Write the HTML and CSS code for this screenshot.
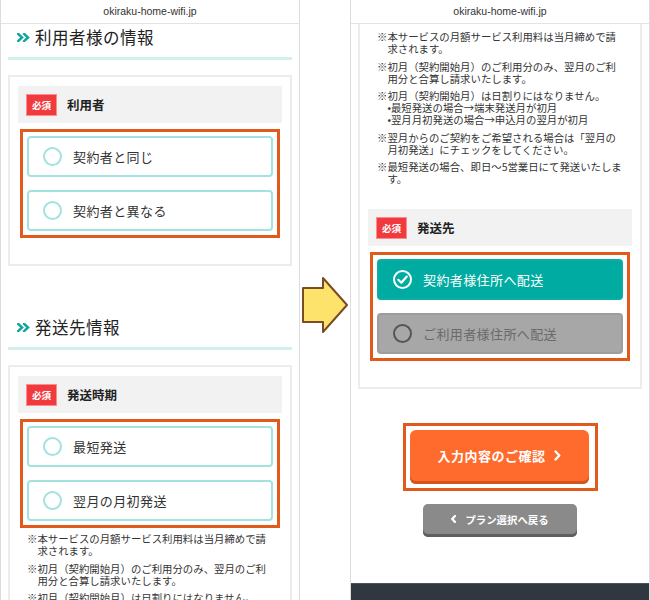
FILE: index.html
```html
<!DOCTYPE html>
<html lang="ja">
<head>
<meta charset="utf-8">
<title>okiraku-home-wifi</title>
<link rel="stylesheet" href="styles.css">
</head>
<body>
<div class="stage">
  <div class="phone">
    <div class="urlbar">okiraku-home-wifi.jp</div>
    <div class="page">
      <h2 class="sec-title"><svg class="dchev" width="13" height="9" viewBox="0 0 13 9"><polyline points="1.2,1 5,4.5 1.2,8"/><polyline points="7.2,1 11,4.5 7.2,8"/></svg>利用者様の情報</h2>
      <div class="card">
        <div class="field-head"><span class="req">必須</span><span class="field-label">利用者</span></div>
        <div class="hl">
          <div class="opt"><span class="radio"></span>契約者と同じ</div>
          <div class="opt"><span class="radio"></span>契約者と異なる</div>
        </div>
      </div>
      <h2 class="sec-title sec-title--gap"><svg class="dchev" width="13" height="9" viewBox="0 0 13 9"><polyline points="1.2,1 5,4.5 1.2,8"/><polyline points="7.2,1 11,4.5 7.2,8"/></svg>発送先情報</h2>
      <div class="card">
        <div class="field-head"><span class="req">必須</span><span class="field-label">発送時期</span></div>
        <div class="hl">
          <div class="opt"><span class="radio"></span>最短発送</div>
          <div class="opt"><span class="radio"></span>翌月の月初発送</div>
        </div>
        <div class="notes">
          <p>※本サービスの月額サービス利用料は当月締めで請<br>求されます。</p>
          <p>※初月（契約開始月）のご利用分のみ、翌月のご利<br>用分と合算し請求いたします。</p>
          <p>※初月（契約開始月）は日割りにはなりません。<br>•最短発送の場合→端末発送月が初月<br>•翌月月初発送の場合→申込月の翌月が初月</p>
          <p>※翌月からのご契約をご希望される場合は「翌月の<br>月初発送」にチェックをしてください。</p>
        </div>
      </div>
    </div>
  </div>

  <div class="between">
    <svg class="arrow" width="48" height="58" viewBox="0 0 48 58"><polygon points="2,12 22,12 22,2 46,29 22,56 22,46 2,46"/></svg>
  </div>

  <div class="phone">
    <div class="urlbar">okiraku-home-wifi.jp</div>
    <div class="page">
      <div class="card card--cont">
        <div class="notes">
          <p>※本サービスの月額サービス利用料は当月締めで請<br>求されます。</p>
          <p>※初月（契約開始月）のご利用分のみ、翌月のご利<br>用分と合算し請求いたします。</p>
          <p>※初月（契約開始月）は日割りにはなりません。<br>•最短発送の場合→端末発送月が初月<br>•翌月月初発送の場合→申込月の翌月が初月</p>
          <p>※翌月からのご契約をご希望される場合は「翌月の<br>月初発送」にチェックをしてください。</p>
          <p>※最短発送の場合、即日〜5営業日にて発送いたしま<br>す。</p>
        </div>
        <div class="field-head field-head--gap"><span class="req">必須</span><span class="field-label">発送先</span></div>
        <div class="hl">
          <div class="opt opt--on"><svg class="check" width="19" height="19" viewBox="0 0 19 19"><circle cx="9.5" cy="9.5" r="8.5"/><polyline points="5.3,9.8 8.3,12.8 13.8,6.6"/></svg>契約者様住所へ配送</div>
          <div class="opt opt--off"><span class="radio"></span>ご利用者様住所へ配送</div>
        </div>
      </div>
      <div class="actions">
        <div class="hl hl--btn">
          <a class="btn-next">入力内容のご確認<svg width="7" height="11" viewBox="0 0 7 11"><polyline points="1.5,1.5 5.3,5.5 1.5,9.5"/></svg></a>
        </div>
        <a class="btn-back"><svg width="5" height="8" viewBox="0 0 5 8"><polyline points="4,1 1.2,4 4,7"/></svg>プラン選択へ戻る</a>
      </div>
    </div>
    <div class="footer"></div>
  </div>
</div>
</body>
</html>
```

FILE: styles.css
```css
* { box-sizing: border-box; margin: 0; padding: 0; }
html, body { width: 650px; height: 600px; overflow: hidden; background: #fff; }
body { font-family: "Noto Sans CJK JP", "Liberation Sans", sans-serif; color: #333; }

.stage { display: flex; width: 650px; height: 600px; }

.phone {
  flex: none;
  width: 300px;
  height: 600px;
  border-left: 1px solid #dcdcdc;
  border-right: 1px solid #dcdcdc;
  overflow: hidden;
  display: flex;
  flex-direction: column;
  background: #fff;
}
.urlbar {
  flex: none;
  height: 24px;
  border-bottom: 1px solid #e3e3e3;
  font-family: "Liberation Sans", Arial, sans-serif;
  font-size: 10.5px;
  line-height: 23px;
  text-align: center;
  color: #333;
}
.page { flex: none; padding: 0 7px; }

.sec-title {
  display: flex;
  align-items: center;
  gap: 5px;
  padding: 1px 0 7px 9px;
  border-bottom: 3px solid #d3f0ef;
  font-size: 16.5px;
  line-height: 25px;
  font-weight: 400;
  letter-spacing: .5px;
  color: #222;
}
.sec-title--gap { margin-top: 48px; }
.dchev { flex: none; }
.dchev polyline { fill: none; stroke: #12a59c; stroke-width: 2.5; stroke-linecap: square; }

.card {
  margin-top: 15px;
  border: 2px solid #ececec;
  padding: 9px 8px 26px;
}
.card--cont { margin-top: 0; border-top: 0; padding-top: 7px; }

.field-head {
  display: flex;
  align-items: center;
  gap: 10px;
  height: 37px;
  padding-left: 8px;
  background: #f2f2f2;
}
.field-head--gap { margin-top: 24px; }
.req {
  width: 31px;
  height: 22px;
  display: flex;
  align-items: center;
  justify-content: center;
  background: #f13a3e;
  box-shadow: inset 0 0 0 1px #ff8c8c;
  color: #fff;
  font-size: 9.6px;
  font-weight: 700;
}
.field-label { font-size: 12.5px; font-weight: 700; color: #222; }

.hl {
  margin: 6px 2px 0;
  border: 3px solid #e15a1b;
  padding: 4px;
  display: flex;
  flex-direction: column;
  gap: 13px;
}
.opt {
  height: 41px;
  display: flex;
  align-items: center;
  gap: 11px;
  padding-left: 14px;
  border: 2px solid #a3e2df;
  border-radius: 4px;
  background: #fff;
  font-size: 13px;
  letter-spacing: .4px;
  color: #333;
}
.radio {
  flex: none;
  width: 19px;
  height: 19px;
  border: 2px solid #a3e2df;
  border-radius: 50%;
}
.opt--on { background: #00aba1; border-color: #0aaea4; color: #fff; }
.opt--off { background: #a7a7a7; border-color: #9d9d9d; color: #6a6a6a; }
.opt--off .radio { border-color: #555; }
.check { flex: none; }
.check circle { fill: none; stroke: #fff; stroke-width: 2; }
.check polyline { fill: none; stroke: #fff; stroke-width: 2.2; stroke-linecap: round; stroke-linejoin: round; }

.notes {
  margin-top: 5px;
  padding-left: 9px;
  font-size: 10.4px;
  line-height: 12px;
  color: #333;
}
.card--cont .notes { margin-top: 0; }
.notes p { padding-left: 1em; text-indent: -1em; white-space: nowrap; }
.notes p + p { margin-top: 5.5px; }

.between {
  flex: none;
  width: 50px;
  display: flex;
  align-items: center;
  justify-content: center;
  padding-top: 9px;
}
.arrow polygon { fill: #fde36b; stroke: #7b4b22; stroke-width: 2; stroke-linejoin: round; }

.actions {
  display: flex;
  flex-direction: column;
  align-items: center;
  gap: 13px;
  margin-top: 34px;
}
.hl--btn { margin: 0; width: 195px; }
.btn-next {
  width: 179px;
  height: 54px;
  display: flex;
  align-items: center;
  justify-content: center;
  gap: 8px;
  padding-bottom: 3px;
  border-radius: 6px;
  background: #ff6b2c;
  box-shadow: inset 0 -3px 0 #d4541f;
  color: #fff;
  font-size: 13px;
  font-weight: 700;
  letter-spacing: .5px;
}
.btn-next polyline, .btn-back polyline { fill: none; stroke: #fff; stroke-width: 2.3; stroke-linecap: round; stroke-linejoin: round; }
.btn-back {
  width: 154px;
  height: 33px;
  display: flex;
  align-items: center;
  justify-content: center;
  gap: 9px;
  padding-bottom: 3px;
  border-radius: 5px;
  background: #8a8a8a;
  box-shadow: inset 0 -3px 0 #5f5f5f;
  color: #fff;
  font-size: 10.4px;
  font-weight: 700;
}

.footer {
  margin-top: auto;
  flex: none;
  height: 17px;
  background: #30373f;
  border-top: 1px solid #4b5159;
}
```
